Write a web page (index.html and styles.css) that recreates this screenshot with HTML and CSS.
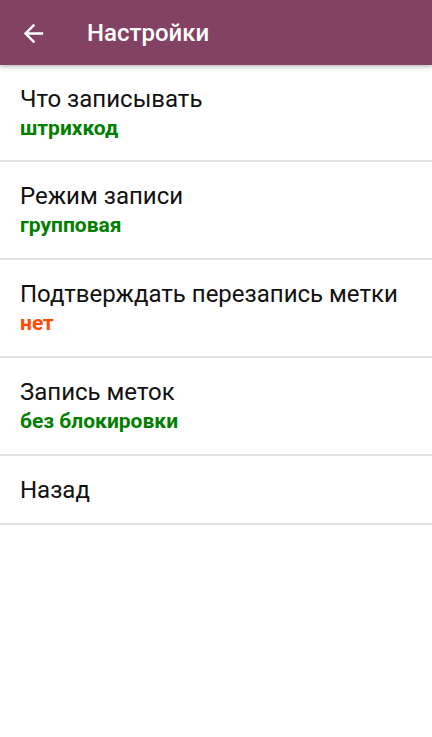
FILE: index.html
```html
<html>

<head>
    <meta http-equiv="Content-Type" content="text/html" charset="utf-8">
    <title>Настройки</title>
    <link rel="stylesheet" href="styles.css">
</head>

<body>
    <div class="toolbar">
        <svg class="back" viewBox="0 0 24 24" width="29" height="29">
            <path d="M20 11H7.83l5.59-5.59L12 4l-8 8 8 8 1.41-1.41L7.83 13H20v-2z" fill="#fff"/>
        </svg>
        <div class="title">Настройки</div>
    </div>

    <div class="list">
        <div class="item">
            <div class="name">Что записывать</div>
            <div class="value">штрихкод</div>
        </div>
        <div class="item">
            <div class="name">Режим записи</div>
            <div class="value">групповая</div>
        </div>
        <div class="item">
            <div class="name">Подтверждать перезапись метки</div>
            <div class="value no">нет</div>
        </div>
        <div class="item">
            <div class="name">Запись меток</div>
            <div class="value">без блокировки</div>
        </div>
        <div class="item single">
            <div class="name">Назад</div>
        </div>
    </div>
</body>

</html>
```

FILE: styles.css
```css
body {
    margin: 0;
    background-color: #fff;
    font-family: Roboto, "Noto Sans", sans-serif;
}

.toolbar {
    display: flex;
    align-items: center;
    height: 65px;
    background-color: #834264;
    box-shadow: 0 2px 4px rgba(0, 0, 0, 0.25);
    position: relative;
    z-index: 1;
}

.back {
    margin-left: 19px;
    margin-top: 2px;
}

.title {
    margin-left: 39px;
    color: #fff;
    font-size: 24px;
    font-weight: 500;
}

.list {
    display: flex;
    flex-direction: column;
}

.item {
    height: 98px;
    box-sizing: border-box;
    padding: 20px 20px 0 20px;
    border-bottom: 2px solid #e2e2e2;
}

.item:first-child {
    height: 97px;
}

.item.single {
    height: 69px;
}

.name {
    font-size: 24px;
    line-height: 28px;
    color: #111;
}

.value {
    margin-top: 3px;
    font-size: 21px;
    line-height: 24px;
    font-weight: bold;
    color: #008000;
}

.value.no {
    color: #ff4a00;
}
```
